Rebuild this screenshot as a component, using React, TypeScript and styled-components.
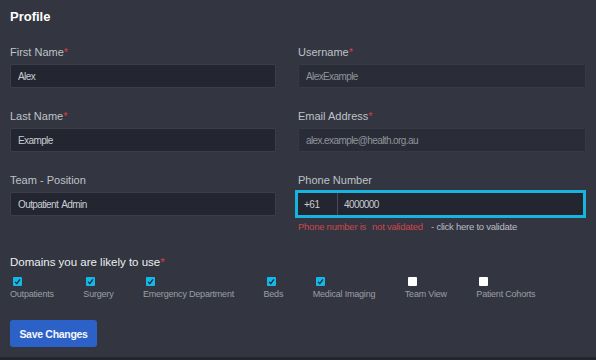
import React from 'react';
import styled, { createGlobalStyle } from 'styled-components';

const GlobalStyle = createGlobalStyle`
  html, body {
    margin: 0;
    padding: 0;
    background: #23252c;
    font-family: 'Liberation Sans', Arial, sans-serif;
  }
`;

const Page = styled.div`
  box-sizing: border-box;
  height: 357px;
  background: #333640;
  padding: 9px 10px 0;
`;

const Title = styled.h2`
  margin: 0 0 20px;
  font-size: 13px;
  line-height: 16px;
  font-weight: bold;
  color: #ffffff;
`;

const Grid = styled.div`
  display: grid;
  grid-template-columns: 266px 288px;
  column-gap: 22px;
  row-gap: 21px;
`;

const Field = styled.div`
  display: flex;
  flex-direction: column;
`;

const Label = styled.label`
  font-size: 11px;
  line-height: 14px;
  color: #bfc2c8;
  margin-bottom: 5px;
`;

const Star = styled.span`
  color: #d23f48;
`;

const Input = styled.input<{ $readOnly?: boolean }>`
  box-sizing: border-box;
  height: 24px;
  width: 100%;
  padding: 0 7px;
  border-radius: 2px;
  border: 1px solid ${({ $readOnly }) => ($readOnly ? '#373a45' : '#3b3e49')};
  background: ${({ $readOnly }) => ($readOnly ? '#2a2d37' : '#232631')};
  color: ${({ $readOnly }) => ($readOnly ? '#8f939b' : '#c9ccd2')};
  font-family: 'Liberation Sans', Arial, sans-serif;
  font-size: 10px;
  letter-spacing: -0.6px;
  word-spacing: 1.5px;
  outline: none;
`;

const PhoneBox = styled.div`
  box-sizing: border-box;
  display: flex;
  height: 28px;
  margin: -2px 0 -2px -3px;
  border: 3px solid #17b4df;
  background: #232631;
`;

const Prefix = styled.div`
  width: 40px;
  padding-left: 6px;
  box-sizing: border-box;
  display: flex;
  align-items: center;
  border-right: 1px solid #4a4d57;
  color: #c9ccd2;
  font-size: 10px;
  letter-spacing: -0.5px;
`;

const PhoneInput = styled.input`
  flex: 1;
  border: none;
  background: transparent;
  padding: 0 6px;
  color: #c9ccd2;
  font-family: 'Liberation Sans', Arial, sans-serif;
  font-size: 10px;
  letter-spacing: -0.6px;
  outline: none;
`;

const Hint = styled.div`
  margin-top: 5px;
  font-size: 9.5px;
  line-height: 12px;
  letter-spacing: -0.25px;
  color: #b9bcc3;
  white-space: nowrap;
`;

const Error = styled.span`
  color: #c9474d;
`;

const Gap = styled.span`
  display: inline-block;
  width: 6px;
`;

const Heading = styled.h3`
  margin: 22px 0 8px;
  font-size: 11.5px;
  line-height: 14px;
  font-weight: normal;
  color: #eceef2;
`;

const Domains = styled.div`
  display: flex;
  gap: 29.5px;
`;

const Domain = styled.label`
  display: flex;
  flex-direction: column;
  align-items: flex-start;
  gap: 3px;
  cursor: pointer;
`;

const Box = styled.span<{ $checked: boolean }>`
  width: 9px;
  height: 9px;
  margin-left: 3px;
  border-radius: 1px;
  background: ${({ $checked }) => ($checked ? '#14b8e8' : '#ffffff')};
  display: flex;
  align-items: center;
  justify-content: center;
`;

const DomainName = styled.span`
  font-size: 9px;
  line-height: 11px;
  letter-spacing: -0.2px;
  color: #9a9ea6;
  white-space: nowrap;
`;

const SaveButton = styled.button`
  margin-top: 20px;
  width: 87px;
  height: 27px;
  border: none;
  border-radius: 3px;
  background: #2c62c8;
  color: #f4f6fa;
  font-family: 'Liberation Sans', Arial, sans-serif;
  font-size: 10.5px;
  font-weight: bold;
  letter-spacing: -0.3px;
  cursor: pointer;
`;

const domains = [
  { name: 'Outpatients', checked: true },
  { name: 'Surgery', checked: true },
  { name: 'Emergency Department', checked: true },
  { name: 'Beds', checked: true },
  { name: 'Medical Imaging', checked: true },
  { name: 'Team View', checked: false },
  { name: 'Patient Cohorts', checked: false },
];

const Check = () => (
  <svg width="7" height="7" viewBox="0 0 10 10">
    <path d="M1.5 5.5 L4 8 L8.5 2" fill="none" stroke="#1c2030" strokeWidth="1.8" />
  </svg>
);

export default function App() {
  return (
    <>
      <GlobalStyle />
      <Page>
        <Title>Profile</Title>
        <Grid>
          <Field>
            <Label>First Name<Star>*</Star></Label>
            <Input defaultValue="Alex" />
          </Field>
          <Field>
            <Label>Username<Star>*</Star></Label>
            <Input $readOnly readOnly defaultValue="AlexExample" />
          </Field>
          <Field>
            <Label>Last Name<Star>*</Star></Label>
            <Input defaultValue="Example" />
          </Field>
          <Field>
            <Label>Email Address<Star>*</Star></Label>
            <Input $readOnly readOnly defaultValue="alex.example@health.org.au" />
          </Field>
          <Field>
            <Label>Team - Position</Label>
            <Input defaultValue="Outpatient Admin" />
          </Field>
          <Field>
            <Label>Phone Number</Label>
            <PhoneBox>
              <Prefix>+61</Prefix>
              <PhoneInput defaultValue="4000000" />
            </PhoneBox>
            <Hint>
              <Error>Phone number is<Gap />not validated</Error>
              <Gap /> - click here to validate
            </Hint>
          </Field>
        </Grid>
        <Heading>Domains you are likely to use<Star>*</Star></Heading>
        <Domains>
          {domains.map((d) => (
            <Domain key={d.name}>
              <Box $checked={d.checked}>{d.checked && <Check />}</Box>
              <DomainName>{d.name}</DomainName>
            </Domain>
          ))}
        </Domains>
        <SaveButton>Save Changes</SaveButton>
      </Page>
    </>
  );
}
